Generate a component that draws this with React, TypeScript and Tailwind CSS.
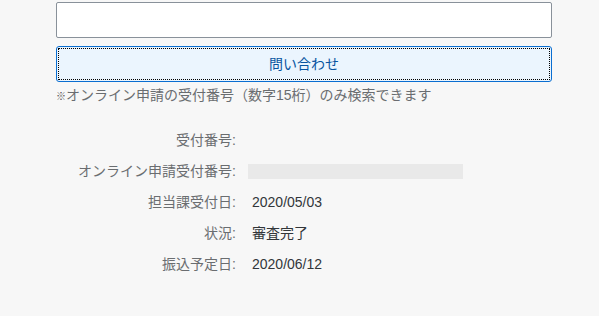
const rows: { label: string; value?: string; placeholder?: boolean }[] = [
  { label: "受付番号:" },
  { label: "オンライン申請受付番号:", placeholder: true },
  { label: "担当課受付日:", value: "2020/05/03" },
  { label: "状況:", value: "審査完了" },
  { label: "振込予定日:", value: "2020/06/12" },
];

const App = () => {
  return (
    <div
      className="h-[316px] w-[599px] overflow-hidden bg-[#f7f7f7] pt-[2px]"
      style={{ fontFamily: '"Liberation Sans", "Noto Sans CJK JP", sans-serif' }}
    >
      <div className="ml-[56px] flex w-[496px] flex-col">
        {/* Search input */}
        <input
          type="text"
          className="h-[36px] w-full rounded-[2px] border border-[#89919a] bg-white px-2 text-sm outline-none"
        />

        {/* Submit button */}
        <button
          type="button"
          className="mt-[8px] flex h-[36px] w-full items-center justify-center rounded-[3px] border border-[#0a6ed1] bg-[#ebf5fe] p-[1px]"
        >
          <span className="flex h-full w-full items-center justify-center border border-dotted border-black text-[14px] text-[#0854a0]">
            問い合わせ
          </span>
        </button>

        <p className="mt-[3px] text-[14px] leading-[20px] text-[#6a6d70]">
          <span className="text-[10px] text-[#555]">※</span>オンライン申請の受付番号（数字15桁）のみ検索できます
        </p>

        {/* Result details */}
        <div className="mt-[18px] grid grid-cols-[180px_1fr] gap-x-[12px]">
          {rows.map((row) => (
            <div key={row.label} className="contents">
              <div className="flex h-[31px] items-center justify-end text-[14px] text-[#6a6d70]">
                {row.label}
              </div>
              <div className="flex h-[31px] items-center text-[14px] text-[#32363a]">
                {row.placeholder ? (
                  <div className="h-[15px] w-[215px] bg-[#e9e9e9]" />
                ) : (
                  <span className="pl-[4px]">{row.value}</span>
                )}
              </div>
            </div>
          ))}
        </div>
      </div>
    </div>
  );
};

export default App;
